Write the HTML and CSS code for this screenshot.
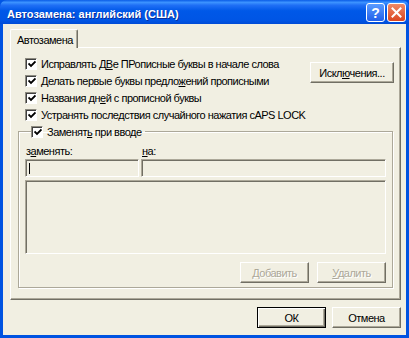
FILE: index.html
```html
<!DOCTYPE html>
<html lang="ru">
<head>
  <meta charset="UTF-8" />
  <title>Автозамена: английский (США)</title>
  <link rel="stylesheet" href="styles.css">
</head>
<body>
  <div class="window">
    <div class="titlebar">
      <span class="title">Автозамена: английский (США)</span>
      <span class="cbtn help">?</span>
      <span class="cbtn close">
        <svg width="11" height="11" viewBox="0 0 11 11"><path d="M1.5 1.5 L9.5 9.5 M9.5 1.5 L1.5 9.5" stroke="#fff" stroke-width="2" stroke-linecap="square"/></svg>
      </span>
    </div>

    <div class="client">
      <div class="tabs">
        <div class="tab">Автозамена</div>
      </div>

      <div class="panel">
        <div class="top">
          <div class="checks">
            <div class="chk"><span class="box"><svg width="8" height="8" viewBox="0 0 8 8"><path d="M0.5 3.5 L3 6 L7.5 1.5" stroke="#000" stroke-width="1.8" fill="none"/></svg></span><span>Исправлять Д<u>В</u>е ПРописные буквы в начале слова</span></div>
            <div class="chk"><span class="box"><svg width="8" height="8" viewBox="0 0 8 8"><path d="M0.5 3.5 L3 6 L7.5 1.5" stroke="#000" stroke-width="1.8" fill="none"/></svg></span><span>Делать первые буквы предло<u>ж</u>ений прописными</span></div>
            <div class="chk"><span class="box"><svg width="8" height="8" viewBox="0 0 8 8"><path d="M0.5 3.5 L3 6 L7.5 1.5" stroke="#000" stroke-width="1.8" fill="none"/></svg></span><span>Названия дн<u>е</u>й с прописной буквы</span></div>
            <div class="chk"><span class="box"><svg width="8" height="8" viewBox="0 0 8 8"><path d="M0.5 3.5 L3 6 L7.5 1.5" stroke="#000" stroke-width="1.8" fill="none"/></svg></span><span>Устранять после<u>д</u>ствия случайного нажатия cAPS LOCK</span></div>
          </div>
          <div class="btn exc-btn"><span>Искл<u>ю</u>чения...</span></div>
        </div>

        <fieldset class="group">
          <legend class="chk"><span class="box"><svg width="8" height="8" viewBox="0 0 8 8"><path d="M0.5 3.5 L3 6 L7.5 1.5" stroke="#000" stroke-width="1.8" fill="none"/></svg></span><span>Заменят<u>ь</u> при вводе</span></legend>

          <div class="fields">
            <div class="field f-from">
              <div class="lbl">з<u>а</u>менять:</div>
              <div class="sunken input"><span class="caret"></span></div>
            </div>
            <div class="field f-to">
              <div class="lbl"><u>н</u>а:</div>
              <div class="sunken input"></div>
            </div>
          </div>

          <div class="sunken list"></div>

          <div class="list-btns">
            <div class="btn disabled"><span><u>Д</u>обавить</span></div>
            <div class="btn disabled"><span><u>У</u>далить</span></div>
          </div>
        </fieldset>
      </div>

      <div class="dlg-btns">
        <div class="btn default">ОК</div>
        <div class="btn">Отмена</div>
      </div>
    </div>
  </div>
</body>
</html>
```

FILE: styles.css
```css
* {
  box-sizing: border-box;
}
body {
  margin: 0;
  font-family: 'Liberation Sans', Arial, sans-serif;
  font-size: 11px;
  letter-spacing: -0.5px;
  color: #000;
  background: #0055e5;
}
.window {
  width: 409px;
  height: 338px;
  display: flex;
  flex-direction: column;
  background: #0053e1;
  border-radius: 7px 7px 0 0;
  overflow: hidden;
}
.titlebar {
  height: 24px;
  flex: none;
  display: flex;
  align-items: center;
  padding: 1px 3px 0 7px;
  background: linear-gradient(to bottom, #0a5ce6 0%, #3c93ff 10%, #1f6ff5 22%, #0058e8 45%, #0055e5 85%, #004bd6 100%);
}
.title {
  flex: 1;
  color: #fff;
  font-weight: bold;
  font-size: 11px;
  letter-spacing: 0;
  padding-top: 3px;
  text-shadow: 1px 1px #0b2f9a;
}
.cbtn {
  width: 19px;
  height: 19px;
  margin-left: 2px;
  border: 1px solid #fff;
  border-radius: 3px;
  display: flex;
  align-items: center;
  justify-content: center;
}
.help {
  background: linear-gradient(to bottom, #5a9bff, #2160ea);
  color: #fff;
  font-weight: bold;
  font-size: 14px;
  letter-spacing: 0;
}
.close {
  background: linear-gradient(to bottom, #ef8a68, #db4620);
}
.client {
  flex: 1;
  margin: 0 3px 3px 3px;
  background: #f1efe2;
  padding: 5px 5px 0 7px;
  display: flex;
  flex-direction: column;
}
.tabs {
  display: flex;
  height: 18px;
  position: relative;
  z-index: 1;
}
.tab {
  width: 68px;
  height: 19px;
  padding: 4px 0 0 6px;
  background: #f1efe2;
  border-top: 1px solid #fff;
  border-left: 1px solid #fff;
  border-right: 1px solid #716f64;
  border-radius: 2px 2px 0 0;
  box-shadow: inset -1px 0 #aca899;
}
.panel {
  width: 391px;
  height: 253px;
  border: 1px solid;
  border-color: #fff #716f64 #716f64 #fff;
  box-shadow: inset -1px -1px #aca899;
  padding: 7px 0 0 0;
}
.top {
  display: flex;
}
.checks {
  flex: 1;
  padding-left: 14px;
}
.chk {
  height: 17px;
  display: flex;
  align-items: center;
  white-space: nowrap;
}
.box {
  width: 12px;
  height: 12px;
  flex: none;
  margin-right: 4px;
  background: #fff;
  border: 1px solid;
  border-color: #8d8b80 #fff #fff #8d8b80;
  box-shadow: inset 1px 1px #404040;
  display: flex;
  align-items: center;
  justify-content: center;
  padding: 1px 0 0 1px;
}
.btn {
  width: 69px;
  height: 21px;
  flex: none;
  display: flex;
  align-items: center;
  justify-content: center;
  background: #f1efe2;
  border: 1px solid;
  border-color: #fff #716f64 #716f64 #fff;
  box-shadow: inset -1px -1px #aca899;
}
.btn.disabled {
  color: #aca899;
  text-shadow: 1px 1px #fff;
}
.btn.default {
  border-color: #000;
  box-shadow: inset 1px 1px #fff, inset -1px -1px #716f64, inset -2px -2px #aca899;
}
.exc-btn {
  width: 84px;
  margin: 7px 6px 0 0;
}
.group {
  height: 165px;
  margin: 0 7px 0 7px;
  padding: 0 6px 0 6px;
  border: 1px solid #aca899;
  box-shadow: inset 1px 1px #fff, 1px 1px #fff;
  min-width: 0;
}
.group legend {
  padding: 0 3px 0 0;
  margin-left: 6px;
}
.fields {
  display: flex;
  gap: 2px;
  margin-top: 5px;
}
.f-from {
  width: 114px;
}
.f-to {
  flex: 1;
}
.lbl {
  height: 13px;
  line-height: 13px;
  margin-bottom: 1px;
  padding-left: 1px;
}
.sunken {
  border: 1px solid;
  border-color: #aca899 #fff #fff #aca899;
  box-shadow: inset 1px 1px #716f64;
}
.input {
  height: 18px;
  padding: 3px 0 0 3px;
}
.caret {
  display: block;
  width: 1px;
  height: 11px;
  background: #000;
}
.list {
  height: 74px;
  margin-top: 3px;
}
.list-btns {
  display: flex;
  justify-content: flex-end;
  gap: 8px;
  margin-top: 8px;
}
.dlg-btns {
  display: flex;
  justify-content: flex-end;
  gap: 6px;
  margin-top: 7px;
}
```
